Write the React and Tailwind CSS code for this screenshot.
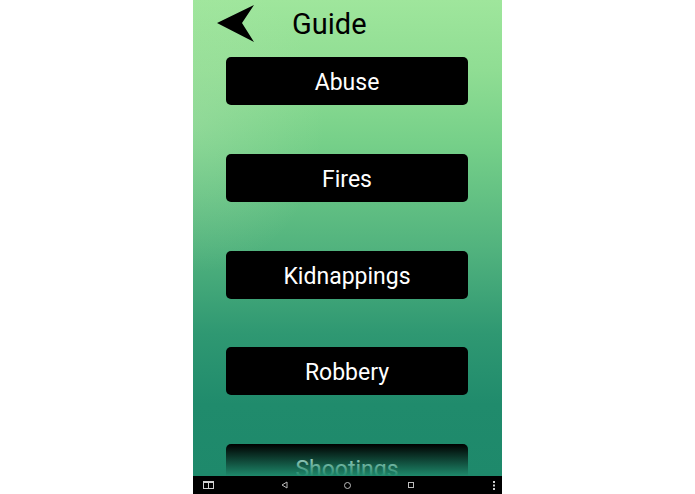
import React from 'react';

const topics = ['Abuse', 'Fires', 'Kidnappings', 'Robbery', 'Shootings'];

function BackArrow() {
  return (
    <svg width="37" height="37" viewBox="0 0 37 37" className="block">
      <polygon points="0,18 37,0 25,18 37,37" fill="#000" />
    </svg>
  );
}

export default function App() {
  return (
    <div className="w-[695px] h-[494px] bg-white overflow-hidden" style={{ fontFamily: 'Roboto, "Noto Sans", sans-serif' }}>
      <div className="ml-[193px] w-[309px] h-[494px] flex flex-col">
        {/* Screen */}
        <div className="relative h-[476px] overflow-hidden bg-[radial-gradient(ellipse_at_0%_26%,rgba(190,230,180,0.3),transparent_30%),linear-gradient(180deg,#9fe69c_0%,#8fdd93_15%,#76d089_30%,#52b37e_52%,#2f9872_70%,#208b6c_85%,#1e896b_100%)]">
          {/* Header */}
          <div className="flex items-start h-[57px]">
            <div className="ml-[24px] mt-[5px]">
              <BackArrow />
            </div>
            <h1 className="ml-[38px] mt-[10px] text-[29px] leading-[28px] text-black">Guide</h1>
          </div>

          {/* List */}
          <div className="flex flex-col gap-[48.75px]">
            {topics.map((t) => (
              <button
                key={t}
                className="ml-[33px] w-[242px] h-[48px] shrink-0 rounded-[5px] bg-black text-white text-[23px] pt-[4px] leading-[44px] text-center"
              >
                {t}
              </button>
            ))}
          </div>

          {/* Fading edge */}
          <div className="absolute left-0 right-0 bottom-0 h-[32px] bg-gradient-to-b from-[rgba(30,137,107,0)] to-[#1e896b]" />
        </div>

        {/* Navigation bar */}
        <div className="h-[18px] bg-black flex items-center">
          <svg width="11" height="8" viewBox="0 0 11 8" className="ml-[10px] block">
            <rect x="0.5" y="0.5" width="10" height="7" fill="none" stroke="#d0d0d0" strokeWidth="1" />
            <line x1="5.5" y1="0.5" x2="5.5" y2="7.5" stroke="#d0d0d0" strokeWidth="1" />
            <line x1="0.5" y1="1.5" x2="10.5" y2="1.5" stroke="#d0d0d0" strokeWidth="1" />
          </svg>
          <svg width="7" height="8" viewBox="0 0 7 8" className="ml-[67px] block">
            <polygon points="1,4 6,1 6,7" fill="none" stroke="#bdbdbd" strokeWidth="1" />
          </svg>
          <svg width="7" height="7" viewBox="0 0 7 7" className="ml-[56px] block">
            <circle cx="3.5" cy="3.5" r="3" fill="none" stroke="#bdbdbd" strokeWidth="1" />
          </svg>
          <svg width="6" height="6" viewBox="0 0 6 6" className="ml-[57px] block">
            <rect x="0.5" y="0.5" width="5" height="5" fill="none" stroke="#bdbdbd" strokeWidth="1" />
          </svg>
          <svg width="2" height="9" viewBox="0 0 2 9" className="ml-[79px] block">
            <rect x="0" y="0" width="2" height="2" fill="#d0d0d0" />
            <rect x="0" y="3.5" width="2" height="2" fill="#d0d0d0" />
            <rect x="0" y="7" width="2" height="2" fill="#d0d0d0" />
          </svg>
        </div>
      </div>
    </div>
  );
}
